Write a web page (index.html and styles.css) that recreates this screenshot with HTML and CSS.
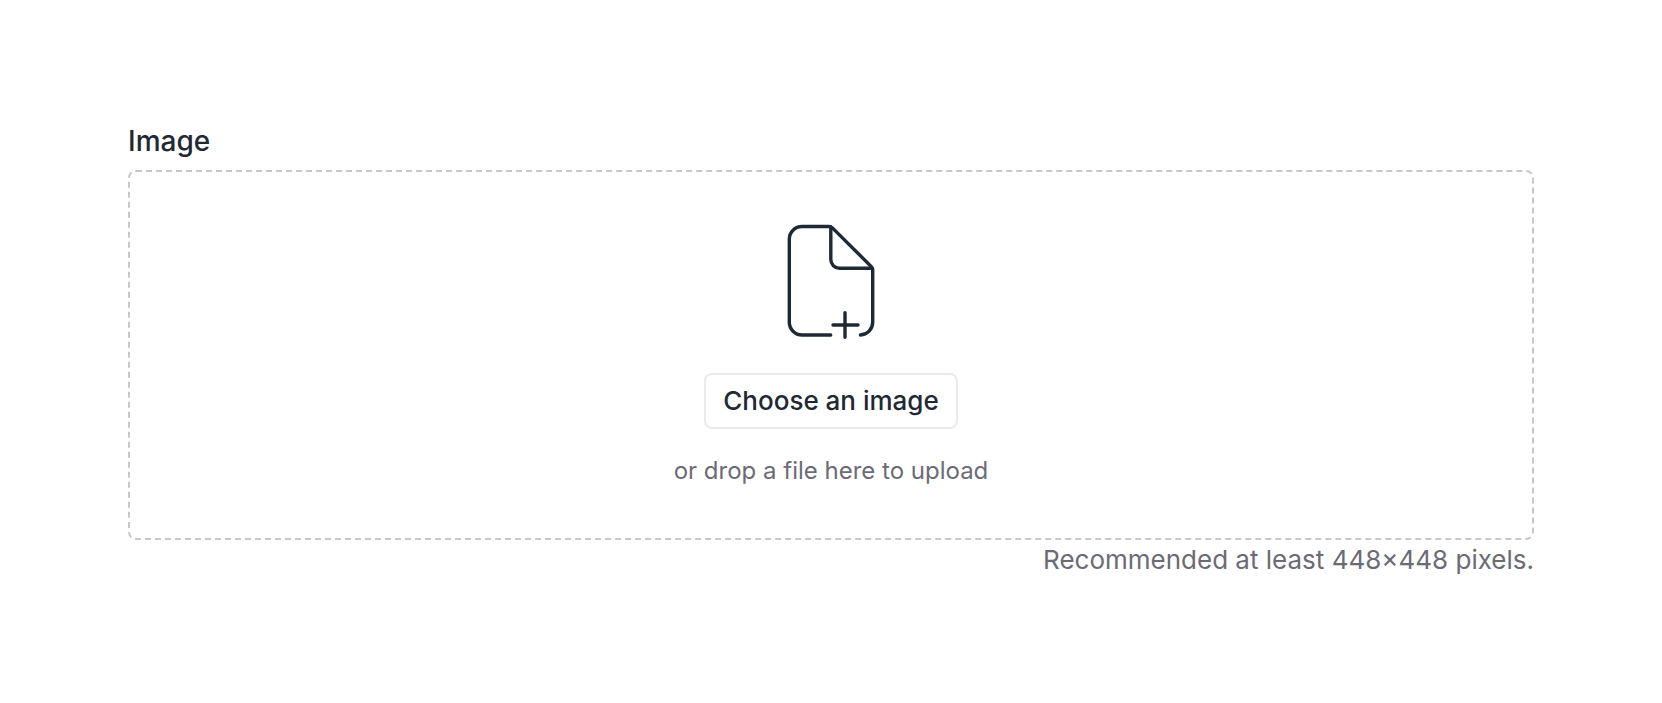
FILE: index.html
```html
<!DOCTYPE html>
<html lang="en">
<head>
<meta charset="utf-8">
<title>Image upload</title>
<link rel="stylesheet" href="styles.css">
</head>
<body>
<main class="field">
  <span class="field-label" id="image-label">Image</span>
  <section class="dropzone" aria-labelledby="image-label">
    <svg class="file-icon" width="88" height="115" viewBox="0 0 88 115" aria-hidden="true">
      <path d="M43.7 111H15A12.7 12.7 0 0 1 2.3 98.3V15.2A12.7 12.7 0 0 1 15 2.5H42Q44 2.5 45.4 3.9L84.3 42.6Q85.7 44 85.7 46V98.3A12.7 12.7 0 0 1 73.4 111"/>
      <path d="M43.8 3V35.6A8.7 8.7 0 0 0 52.5 44.3H85.2"/>
      <path d="M46 101H71M58 88.7V113.3"/>
    </svg>
    <button class="choose" type="button">Choose an image</button>
    <p class="drop-text">or drop a file here to upload</p>
  </section>
  <p class="hint">Recommended at least 448×448 pixels.</p>
</main>
</body>
</html>
```
FILE: styles.css
```css
* {
  box-sizing: border-box;
}

body {
  margin: 0;
  background: #fff;
  color: #1f2933;
  font-family: Inter, sans-serif;
}

.field {
  display: flex;
  flex-direction: column;
  padding: 121px 128px;
}

.field-label {
  margin-bottom: 9px;
  font-size: 28px;
  font-weight: 500;
  line-height: 40px;
}

.dropzone {
  display: flex;
  flex-direction: column;
  align-items: center;
  padding: 52px 24px 49px;
  border: 2px dashed #c8c8c8;
  border-radius: 8px;
}

.file-icon {
  fill: none;
  stroke: #1f2933;
  stroke-width: 3.4;
  stroke-linecap: round;
  stroke-linejoin: round;
}

.choose {
  margin-top: 34px;
  padding: 8px 17px;
  border: 2px solid #ebebed;
  border-radius: 8px;
  background: #fff;
  color: inherit;
  font: 500 26px/36px Inter, sans-serif;
}

.drop-text {
  margin: 24px 0 0;
  color: #6b6b76;
  font-size: 24px;
  line-height: 36px;
}

.hint {
  margin: 0;
  color: #6b6b76;
  font-size: 26px;
  line-height: 40px;
  text-align: right;
}
```
